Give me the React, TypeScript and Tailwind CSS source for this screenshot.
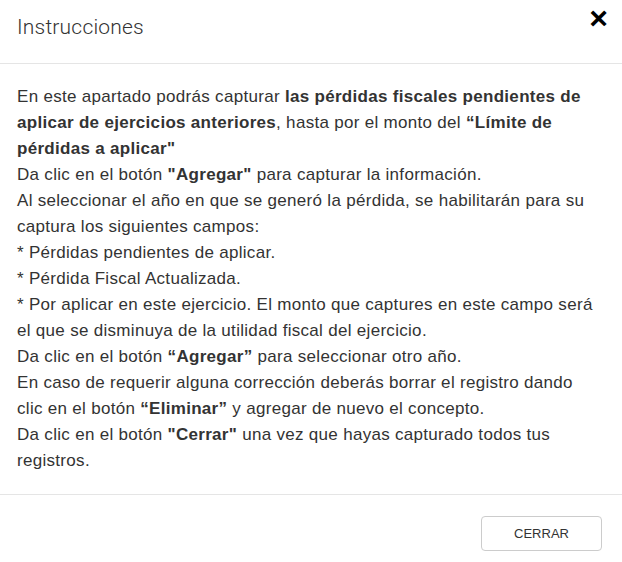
import React from "react";

export default function App() {
  const f = { fontFamily: '"Liberation Sans", Arial, Helvetica, sans-serif' };
  return (
    <div className="w-[622px] h-[562px] bg-white text-[#333333]" style={f}>
      <div className="relative h-[64px] border-b border-[#e5e5e5] px-[17px] flex items-start">
        <h4 className="mt-[12px] text-[21px] leading-[30px] font-light text-[#333333] font-['Roboto',sans-serif] tracking-[0.2px]">Instrucciones</h4>
        <button className="absolute right-[14px] top-[2px] text-[32px] leading-[32px] font-bold text-black">×</button>
      </div>
      <div className="pl-[17px] pr-[24px] pt-[20px] pb-[20px] text-[17px] tracking-[0.3px] leading-[26px] border-b border-[#e5e5e5]">
        <p>
          En este apartado podrás capturar <b>las pérdidas fiscales pendientes de aplicar de ejercicios anteriores</b>, hasta por el monto del <b>“Límite de pérdidas a aplicar"</b>
          <br />
          Da clic en el botón <b>"Agregar"</b> para capturar la información.
          <br />
          Al seleccionar el año en que se generó la pérdida, se habilitarán para su captura los siguientes campos:
          <br />* Pérdidas pendientes de aplicar.
          <br />* Pérdida Fiscal Actualizada.
          <br />* Por aplicar en este ejercicio. El monto que captures en este campo será el que se disminuya de la utilidad fiscal del ejercicio.
          <br />
          Da clic en el botón <b>“Agregar”</b> para seleccionar otro año.
          <br />
          En caso de requerir alguna corrección deberás borrar el registro dando clic en el botón <b>“Eliminar”</b> y agregar de nuevo el concepto.
          <br />
          Da clic en el botón <b>"Cerrar"</b> una vez que hayas capturado todos tus registros.
        </p>
      </div>
      <div className="flex justify-end px-[20px] pt-[21px]">
        <button className="w-[121px] h-[35px] border border-[#cccccc] rounded-[4px] text-[13px] text-[#333333] bg-white">CERRAR</button>
      </div>
    </div>
  );
}
